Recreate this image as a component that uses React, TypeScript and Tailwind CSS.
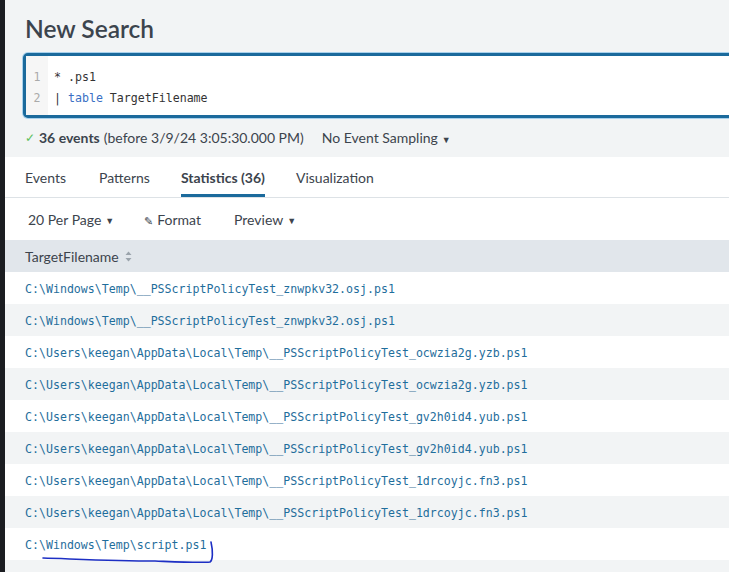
import React from "react";

const mono = { fontFamily: '"DejaVu Sans Mono", "Liberation Mono", monospace' };

const rows = [
  "C:\\Windows\\Temp\\__PSScriptPolicyTest_znwpkv32.osj.ps1",
  "C:\\Windows\\Temp\\__PSScriptPolicyTest_znwpkv32.osj.ps1",
  "C:\\Users\\keegan\\AppData\\Local\\Temp\\__PSScriptPolicyTest_ocwzia2g.yzb.ps1",
  "C:\\Users\\keegan\\AppData\\Local\\Temp\\__PSScriptPolicyTest_ocwzia2g.yzb.ps1",
  "C:\\Users\\keegan\\AppData\\Local\\Temp\\__PSScriptPolicyTest_gv2h0id4.yub.ps1",
  "C:\\Users\\keegan\\AppData\\Local\\Temp\\__PSScriptPolicyTest_gv2h0id4.yub.ps1",
  "C:\\Users\\keegan\\AppData\\Local\\Temp\\__PSScriptPolicyTest_1drcoyjc.fn3.ps1",
  "C:\\Users\\keegan\\AppData\\Local\\Temp\\__PSScriptPolicyTest_1drcoyjc.fn3.ps1",
  "C:\\Windows\\Temp\\script.ps1",
  "C:\\Users\\keegan\\AppData\\Local\\Temp\\__PSScriptPolicyTest_1drcoyjc.fn3.ps1",
];

function Caret() {
  return <span className="ml-[4px] inline-block text-[9px] align-middle">▼</span>;
}

export default function App() {
  return (
    <div
      className="flex h-[572px] w-[729px] overflow-hidden bg-[#1b1d21] text-[#3c444d]"
      style={{ fontFamily: 'Lato, "Open Sans", sans-serif' }}
    >
      <div className="w-[5px] shrink-0" />
      <div className="flex min-w-0 flex-1 flex-col">
        {/* header */}
        <div className="shrink-0 bg-[#f2f4f5] pl-[20px]">
          <h1 className="pt-[14px] text-[24.5px] font-semibold leading-[30px] text-[#3c444d]">
            New Search
          </h1>
          <div className="mt-[9px] -mr-[6px] -ml-[2px] flex h-[65px] rounded-[5px] border-[3px] border-[#1b6a9c] bg-white shadow-[0_0_0_1px_#a8d1ec]">
            <div
              className="flex w-[22px] flex-col items-center bg-[#f6f6f6] pt-[11px] text-[11.6px] leading-[21px] text-[#aaa]"
              style={mono}
            >
              <span>1</span>
              <span>2</span>
            </div>
            <div className="pl-[6px] pt-[11px] text-[11.6px] leading-[21px] text-[#333]" style={mono}>
              <div>* .ps1</div>
              <div>
                | <span className="text-[#3a6fc4]">table</span> TargetFilename
              </div>
            </div>
          </div>
          <div className="flex h-[39px] items-center text-[14px]">
            <span className="mr-[4px] text-[12px] text-[#5cc05c]">✓</span>
            <span className="font-bold">36 events</span>
            <span className="ml-[4px]">(before 3/9/24 3:05:30.000 PM)</span>
            <span className="ml-[18px]">
              No Event Sampling
              <Caret />
            </span>
          </div>
        </div>

        {/* tabs */}
        <div className="flex h-[41px] shrink-0 items-end border-b border-[#dde2e6] bg-white pl-[20px] text-[14px]">
          <div className="mr-[33px] pb-[9px]">Events</div>
          <div className="mr-[31px] pb-[9px]">Patterns</div>
          <div className="mr-[31px] border-b-[3px] border-[#1b6a9c] pb-[6px] font-bold">
            Statistics (36)
          </div>
          <div className="pb-[9px]">Visualization</div>
        </div>

        {/* toolbar */}
        <div className="flex h-[42px] shrink-0 items-center bg-white pl-[23px] text-[14px]">
          <span>
            20 Per Page
            <Caret />
          </span>
          <span className="ml-[30px]">
            <span className="mr-[4px] inline-block text-[11px]">✎</span>Format
          </span>
          <span className="ml-[33px]">
            Preview
            <Caret />
          </span>
        </div>

        {/* table */}
        <div className="relative shrink-0 bg-white">
          <div className="flex h-[32px] items-center bg-[#e1e6eb] pl-[20px] text-[14px]">
            TargetFilename
            <svg className="ml-[6px]" width="7" height="11" viewBox="0 0 7 11">
              <path d="M3.5 0.5 L6.5 4 L0.5 4 Z" fill="#9aa3ab" />
              <path d="M3.5 10.5 L6.5 7 L0.5 7 Z" fill="#9aa3ab" />
            </svg>
          </div>
          {rows.map((r, i) => (
            <div
              key={i}
              className={
                "flex h-[32px] items-center pl-[20px] pt-[3px] text-[11.6px] text-[#1f6e9c] " +
                (i % 2 === 1 ? "bg-[#f2f4f5]" : "bg-white")
              }
              style={mono}
            >
              {r}
            </div>
          ))}
          <svg
            className="pointer-events-none absolute left-0 top-0"
            width="724"
            height="352"
            viewBox="0 0 724 352"
          >
            <path
              d="M38 318 C 70 319, 110 321, 150 321 C 175 322, 195 323, 205 322 C 208 320, 208 311, 206 302"
              stroke="#1d2fc4"
              strokeWidth="1.6"
              fill="none"
              strokeLinecap="round"
            />
          </svg>
        </div>
      </div>
    </div>
  );
}
